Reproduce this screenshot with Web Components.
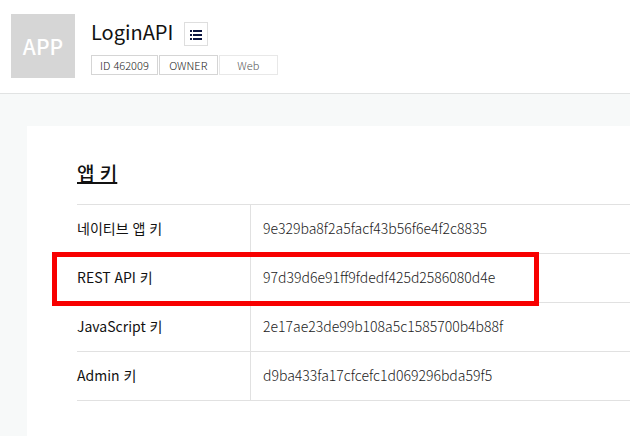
<!DOCTYPE html>
<html lang="ko">
<head>
<meta charset="utf-8">
<title>LoginAPI</title>
<style>
  body {
    margin: 0;
    min-height: 100vh;
    display: flex;
    flex-direction: column;
    background: #f7f9f9;
    color: #111;
    font-family: "Noto Sans CJK KR", sans-serif;
    font-size: 14px;
    line-height: 20px;
  }
</style>
</head>
<body>
  <app-header name="LoginAPI">
    <app-tag>ID 462009</app-tag>
    <app-tag>OWNER</app-tag>
    <app-tag muted>Web</app-tag>
  </app-header>

  <content-card>
    <span slot="title">앱 키</span>
    <key-table>
      <key-item label="네이티브 앱 키" value="9e329ba8f2a5facf43b56f6e4f2c8835"></key-item>
      <key-item label="REST API 키" value="97d39d6e91ff9fdedf425d2586080d4e" highlighted></key-item>
      <key-item label="JavaScript 키" value="2e17ae23de99b108a5c1585700b4b88f"></key-item>
      <key-item label="Admin 키" value="d9ba433fa17cfcefc1d069296bda59f5"></key-item>
    </key-table>
  </content-card>

<script>
class AppHeader extends HTMLElement {
  connectedCallback() {
    if (this.shadowRoot) {
      return;
    }

    const shadow = this.attachShadow({ mode: "open" });

    shadow.innerHTML = `
      <style>
        :host {
          display: flex;
          align-items: flex-start;
          gap: 16px;
          padding: 14px 11px 15px;
          background: #fff;
          border-bottom: 1px solid #e1e3e3;
        }

        .logo {
          flex: none;
          display: flex;
          align-items: center;
          justify-content: center;
          width: 64px;
          height: 64px;
          background: #d6d6d6;
          color: #fff;
          font-size: 21px;
          font-weight: 500;
        }

        .info {
          display: flex;
          flex-direction: column;
          gap: 9px;
          padding-top: 4px;
        }

        .heading {
          display: flex;
          align-items: flex-end;
          gap: 11px;
        }

        h1 {
          margin: 0;
          font-size: 20px;
          font-weight: 400;
          line-height: 28px;
        }

        button {
          display: flex;
          align-items: center;
          justify-content: center;
          width: 24px;
          height: 24px;
          padding: 2px 0 0;
          border: 1px solid #dedede;
          background: #fff;
          color: #0b1540;
          cursor: pointer;
        }

        .tags {
          display: flex;
          gap: 1px;
        }
      </style>

      <div class="logo">APP</div>
      <div class="info">
        <div class="heading">
          <h1></h1>
          <button type="button" aria-label="앱 목록">
            <svg width="12" height="10" viewBox="0 0 12 10" fill="currentColor" shape-rendering="crispEdges">
              <path d="M0 0h2v2H0zM3 0h9v2H3zM0 4h2v2H0zM3 4h9v2H3zM0 8h2v2H0zM3 8h9v2H3z"/>
            </svg>
          </button>
        </div>
        <div class="tags"><slot></slot></div>
      </div>
    `;

    shadow.querySelector("h1").textContent = this.getAttribute("name");
  }
}

class AppTag extends HTMLElement {
  connectedCallback() {
    if (this.shadowRoot) {
      return;
    }

    const shadow = this.attachShadow({ mode: "open" });

    shadow.innerHTML = `
      <style>
        :host {
          display: block;
          box-sizing: border-box;
          min-width: 59px;
          padding: 0 8px;
          border: 1px solid #d5d5d5;
          color: #222;
          font-size: 11px;
          font-weight: 300;
          line-height: 18px;
          text-align: center;
        }

        :host([muted]) {
          border-color: #e8e8e8;
          color: #555;
        }
      </style>
      <slot></slot>
    `;
  }
}

class ContentCard extends HTMLElement {
  connectedCallback() {
    if (this.shadowRoot) {
      return;
    }

    const shadow = this.attachShadow({ mode: "open" });

    shadow.innerHTML = `
      <style>
        :host {
          display: block;
          flex: 1;
          margin: 32px 0 0 27px;
          padding: 32px 0 32px 50px;
          background: #fff;
        }

        h2 {
          margin: 0 0 16px;
          font-size: 19px;
          font-weight: 500;
          line-height: 30px;
          text-decoration: underline;
          text-decoration-thickness: 2px;
        }
      </style>
      <h2><slot name="title"></slot></h2>
      <slot></slot>
    `;
  }
}

class KeyTable extends HTMLElement {
  connectedCallback() {
    if (this.shadowRoot) {
      return;
    }

    const shadow = this.attachShadow({ mode: "open" });

    shadow.innerHTML = `
      <style>
        :host {
          display: block;
        }

        table {
          width: 100%;
          border-top: 1px solid #e1e1e1;
          border-spacing: 0;
        }

        th,
        td {
          height: 46px;
          padding: 0 0 2px;
          border-bottom: 1px solid #e1e1e1;
          text-align: left;
        }

        th {
          width: 173px;
          border-right: 1px solid #e1e1e1;
          font-weight: 400;
        }

        td {
          padding-left: 12px;
          color: #222;
          font-weight: 300;
        }

        tr.highlighted {
          position: relative;
        }

        /* frame drawn over the row and its borders */
        .highlighted th::after {
          content: "";
          position: absolute;
          box-sizing: border-box;
          top: -2px;
          bottom: -3px;
          left: -25px;
          width: 487px;
          border: 5px solid #f80000;
          pointer-events: none;
        }
      </style>
      <table><tbody></tbody></table>
    `;

    this.body = shadow.querySelector("tbody");
    this.render();
  }

  render() {
    for (const item of this.querySelectorAll("key-item")) {
      const row = this.body.insertRow();
      row.classList.toggle("highlighted", item.hasAttribute("highlighted"));

      const label = document.createElement("th");
      label.scope = "row";
      label.textContent = item.getAttribute("label");
      row.append(label);

      row.insertCell().textContent = item.getAttribute("value");
    }
  }
}

// Holds one label and value for the table around it
class KeyItem extends HTMLElement {
  connectedCallback() {
    this.hidden = true;
  }
}

customElements.define("app-header", AppHeader);
customElements.define("app-tag", AppTag);
customElements.define("content-card", ContentCard);
customElements.define("key-table", KeyTable);
customElements.define("key-item", KeyItem);
</script>
</body>
</html>
